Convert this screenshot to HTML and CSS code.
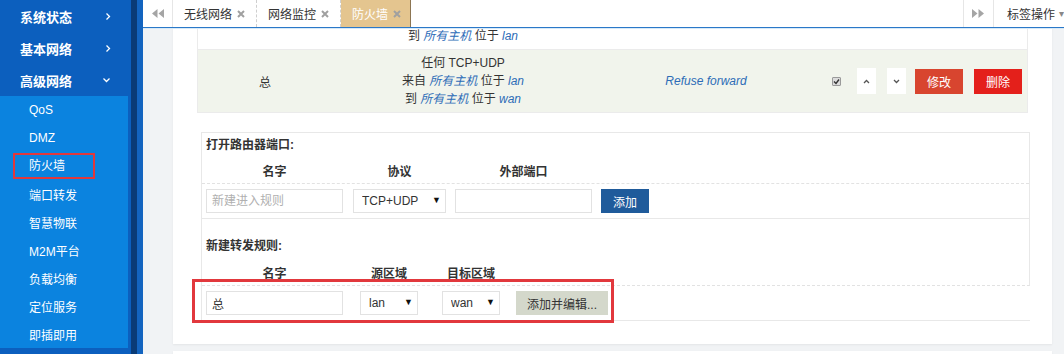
FILE: index.html
```html
<!DOCTYPE html>
<html>
  <head>
    <meta charset="UTF-8" />
    <title>防火墙</title>
    <link rel="stylesheet" href="styles.css">
  </head>

  <body>
    <div class="layout">
      <aside class="sidebar">
        <ul class="menu">
          <li class="menu-head">系统状态
            <svg class="chev" width="6" height="9" viewBox="0 0 6 9"><path d="M1.5 1.5 L4.5 4.5 L1.5 7.5" /></svg>
          </li>
          <li class="menu-head">基本网络
            <svg class="chev" width="6" height="9" viewBox="0 0 6 9"><path d="M1.5 1.5 L4.5 4.5 L1.5 7.5" /></svg>
          </li>
          <li class="menu-head">高级网络
            <svg class="chev" width="9" height="6" viewBox="0 0 9 6"><path d="M1.5 1.5 L4.5 4.5 L7.5 1.5" /></svg>
          </li>
        </ul>
        <ul class="submenu">
          <li>QoS</li>
          <li>DMZ</li>
          <li class="current"><span class="mark">防火墙</span></li>
          <li>端口转发</li>
          <li>智慧物联</li>
          <li>M2M平台</li>
          <li>负载均衡</li>
          <li>定位服务</li>
          <li>即插即用</li>
        </ul>
      </aside>

      <div class="main">
        <div class="tabbar">
          <div class="tab-nav">
            <svg width="12" height="9" viewBox="0 0 12 9"><path d="M5.5 0 L0 4.5 L5.5 9 Z M12 0 L6.5 4.5 L12 9 Z" /></svg>
          </div>
          <div class="tab">无线网络 <svg class="close" width="8" height="8" viewBox="0 0 8 8"><path d="M1 1 L7 7 M7 1 L1 7" /></svg></div>
          <div class="tab">网络监控 <svg class="close" width="8" height="8" viewBox="0 0 8 8"><path d="M1 1 L7 7 M7 1 L1 7" /></svg></div>
          <div class="tab active">防火墙 <svg class="close" width="8" height="8" viewBox="0 0 8 8"><path d="M1 1 L7 7 M7 1 L1 7" /></svg></div>
          <div class="tab-right">
            <div class="tab-nav">
              <svg width="12" height="9" viewBox="0 0 12 9"><path d="M0 0 L5.5 4.5 L0 9 Z M6.5 0 L12 4.5 L6.5 9 Z" /></svg>
            </div>
            <div class="tab-ops">标签操作 <span class="tab-caret">▾</span></div>
          </div>
        </div>

        <div class="content">
          <div class="panel">
            <div class="rules">
              <div class="rule-row">
                <div class="cell"></div>
                <div class="cell desc">
                  <div>任何 TCP+UDP</div>
                  <div>来自 <a>所有主机</a> 位于 <a>wan</a></div>
                  <div>到 <a>所有主机</a> 位于 <a>lan</a></div>
                </div>
                <div class="cell"></div>
                <div class="cell"></div>
              </div>
              <div class="rule-row odd">
                <div class="cell">总</div>
                <div class="cell desc">
                  <div>任何 TCP+UDP</div>
                  <div>来自 <a>所有主机</a> 位于 <a>lan</a></div>
                  <div>到 <a>所有主机</a> 位于 <a>wan</a></div>
                </div>
                <div class="cell"><a>Refuse forward</a></div>
                <div class="cell actions">
                  <span class="check">
                    <svg width="7" height="7" viewBox="0 0 7 7"><path d="M1 3.5 L3 5.5 L6 1.5" /></svg>
                  </span>
                  <button class="btn-move up">
                    <svg width="7" height="5" viewBox="0 0 7 5"><path d="M1 4 L3.5 1.5 L6 4" /></svg>
                  </button>
                  <button class="btn-move down">
                    <svg width="7" height="5" viewBox="0 0 7 5"><path d="M1 1 L3.5 3.5 L6 1" /></svg>
                  </button>
                  <button class="btn btn-edit">修改</button>
                  <button class="btn btn-del">删除</button>
                </div>
              </div>
            </div>

            <div class="section open-ports">
              <div class="section-title">打开路由器端口:</div>
              <div class="form-row head">
                <div>名字</div>
                <div>协议</div>
                <div>外部端口</div>
              </div>
              <div class="form-row inputs">
                <input class="field" type="text" placeholder="新建进入规则">
                <label class="select">
                  <select><option>TCP+UDP</option></select>
                </label>
                <input class="field" type="text">
                <button class="btn btn-add">添加</button>
              </div>
            </div>

            <div class="section forward">
              <div class="section-title">新建转发规则:</div>
              <div class="form-row head">
                <div>名字</div>
                <div>源区域</div>
                <div>目标区域</div>
              </div>
              <div class="form-row inputs">
                <input class="field" type="text" value="总">
                <label class="select">
                  <select><option>lan</option></select>
                </label>
                <label class="select">
                  <select><option>wan</option></select>
                </label>
                <button class="btn btn-apply">添加并编辑...</button>
              </div>
              <div class="callout"></div>
            </div>
          </div>
          <div class="panel panel-next"></div>
        </div>
      </div>
    </div>
  </body>
</html>
```

FILE: styles.css
```css
body {
  margin: 0;
  font-family: "Liberation Sans", "Noto Sans CJK SC", sans-serif;
  font-size: 12px;
  color: #333;
}

.layout {
  display: flex;
  height: 354px;
  overflow: hidden;
}

/* sidebar */

.sidebar {
  flex-shrink: 0;
  width: 131px;
  background: #0c5fbe;
  border-right: 6px solid #0a3b76;
}

.menu,
.submenu {
  margin: 0;
  padding: 0;
  list-style: none;
}

.menu-head {
  display: flex;
  justify-content: space-between;
  align-items: center;
  height: 32px;
  padding: 0 20px 0 20px;
  font-size: 13px;
  font-weight: bold;
  color: #fff;
}

.chev {
  fill: none;
  stroke: #fff;
  stroke-width: 1.3;
}

.submenu {
  margin-right: 3px;
  background: #0b83df;
}

.submenu li {
  display: flex;
  align-items: center;
  height: 28px;
  padding-left: 29px;
  color: #fff;
}

.submenu li.current {
  padding-left: 13px;
}

.submenu .mark {
  box-sizing: border-box;
  width: 82px;
  height: 26px;
  padding-left: 14px;
  line-height: 22px;
  border: 2px solid #e2383c;
}

/* main */

.main {
  display: flex;
  flex: 1;
  flex-direction: column;
  min-width: 0;
  border-left: 6px solid #1364bf;
  background: #f1f3f5;
}

.tabbar {
  display: flex;
  flex-shrink: 0;
  height: 27px;
  background: #fff;
  border-bottom: 1px solid #2a78c8;
  box-shadow: 0 1px 0 #d6e9f8;
  position: relative;
  z-index: 2;
}

.tab-nav {
  display: flex;
  justify-content: center;
  align-items: center;
  width: 29px;
  border-right: 1px solid #e6e6e6;
  fill: #a5a5a5;
}

.tab {
  display: flex;
  align-items: center;
  gap: 5px;
  padding: 0 11px 0 11px;
  border-right: 1px dashed #cfcfcf;
  white-space: nowrap;
}

.tab.active {
  padding-right: 9px;
  color: #fff;
  background: #e4c58f;
  border-right: 1px solid #8c7552;
}

.close {
  fill: none;
  stroke: #a0a0a0;
  stroke-width: 2;
}

.tab-right {
  display: flex;
  margin-left: auto;
}

.tab-right .tab-nav {
  border-left: 1px solid #e6e6e6;
}

.tab-ops {
  display: flex;
  align-items: center;
  gap: 4px;
  padding-left: 13px;
  white-space: nowrap;
}

.tab-caret {
  font-size: 10px;
  color: #888;
}

.content {
  flex: 1;
  overflow: hidden;
  padding: 0 12px 0 30px;
}

.panel {
  margin-top: -41px;
  padding: 0 24px 23px 24px;
  background: #fff;
  box-shadow: 0 1px 2px rgba(0, 0, 0, 0.06);
}

.panel.panel-next {
  height: 40px;
  margin-top: 7px;
  padding: 0;
}

/* rules table */

.rule-row {
  display: grid;
  grid-template-columns: 134px 262px 224px 1fr;
  box-sizing: border-box;
  height: 63px;
  border: 1px solid #ebebeb;
  border-top: 0;
}

.rule-row.odd {
  background: #f1f4ec;
}

.cell {
  display: flex;
  flex-direction: column;
  justify-content: center;
  align-items: center;
  text-align: center;
}

.desc {
  line-height: 18px;
}

a {
  font-style: italic;
  color: #2d6cb7;
}

.actions {
  flex-direction: row;
  justify-content: flex-start;
  padding-left: 14px;
}

.check {
  display: flex;
  justify-content: center;
  align-items: center;
  box-sizing: border-box;
  width: 9px;
  height: 9px;
  border: 1px solid #9a9a9a;
  border-radius: 1px;
  background: #dcdcdc;
}

.check svg {
  fill: none;
  stroke: #333;
  stroke-width: 1.4;
}

button {
  font-family: inherit;
  font-size: 12px;
  border: 0;
  padding: 0;
  cursor: pointer;
}

.btn-move {
  display: flex;
  justify-content: center;
  align-items: center;
  width: 19px;
  height: 26px;
  background: #fff;
}

.btn-move svg {
  fill: none;
  stroke: #555;
  stroke-width: 1.3;
}

.btn-move.up {
  margin-left: 16px;
}

.btn-move.down {
  margin-left: 11px;
}

.btn {
  height: 25px;
  color: #fff;
}

.btn-edit {
  width: 48px;
  margin-left: 9px;
  background: #d8452f;
}

.btn-del {
  width: 48px;
  margin-left: 11px;
  background: #e4201b;
}

/* forms */

.section {
  position: relative;
  margin: 0 -2px 0 4px;
  border-left: 1px solid #e8e8e8;
  border-right: 1px solid #e8e8e8;
}

.open-ports {
  margin-top: 19px;
  border-top: 1px solid #e8e8e8;
}

.forward {
  border-right: 0;
}

.section-title {
  height: 24px;
  padding-left: 4px;
  line-height: 24px;
  font-weight: bold;
}

.forward .section-title {
  height: 40px;
  padding-top: 19px;
  box-sizing: border-box;
  line-height: 16px;
  border-right: 1px solid #e8e8e8;
}

.form-row {
  display: flex;
  align-items: center;
  padding-left: 4px;
}

.form-row > * {
  flex-shrink: 0;
}

.open-ports .form-row > :nth-child(1) { width: 137px; }
.open-ports .form-row > :nth-child(2) { width: 93px; margin-left: 10px; }
.open-ports .form-row > :nth-child(3) { width: 137px; margin-left: 9px; }
.open-ports .form-row > :nth-child(4) { width: 48px; margin-left: 9px; }

.forward .form-row > :nth-child(1) { width: 137px; }
.forward .form-row > :nth-child(2) { width: 58px; margin-left: 17px; }
.forward .form-row > :nth-child(3) { width: 58px; margin-left: 24px; }
.forward .form-row > :nth-child(4) { width: 92px; margin-left: 16px; }

.form-row.head {
  height: 26px;
  font-weight: bold;
  text-align: center;
  white-space: nowrap;
  border-bottom: 1px dashed #e2e2e2;
}

.forward .form-row.head {
  border-right: 1px solid #e8e8e8;
}

.form-row.inputs {
  height: 34px;
  border-bottom: 1px solid #e8e8e8;
}

.field {
  box-sizing: border-box;
  height: 24px;
  padding: 0 5px;
  font-family: inherit;
  font-size: 12px;
  color: #333;
  border: 1px solid #e2e2e2;
  outline: none;
}

.field::placeholder {
  color: #b0b0b0;
}

.select {
  position: relative;
  display: block;
  height: 24px;
}

.select select {
  box-sizing: border-box;
  width: 100%;
  height: 24px;
  padding: 0 0 0 8px;
  font-family: inherit;
  font-size: 12px;
  color: #333;
  background: #fff;
  border: 1px solid #e2e2e2;
  border-radius: 0;
  appearance: none;
  -webkit-appearance: none;
  outline: none;
}

.select::after {
  content: "▼";
  position: absolute;
  top: 6px;
  right: 5px;
  font-size: 9px;
  color: #111;
  pointer-events: none;
}

.btn-add {
  height: 24px;
  background: #1f5b9b;
}

.btn-apply {
  height: 24px;
  color: #333;
  background: #d4d8cb;
}

.callout {
  position: absolute;
  top: 60px;
  left: -10px;
  box-sizing: border-box;
  width: 422px;
  height: 44px;
  border: 3px solid #e2383d;
}
```
